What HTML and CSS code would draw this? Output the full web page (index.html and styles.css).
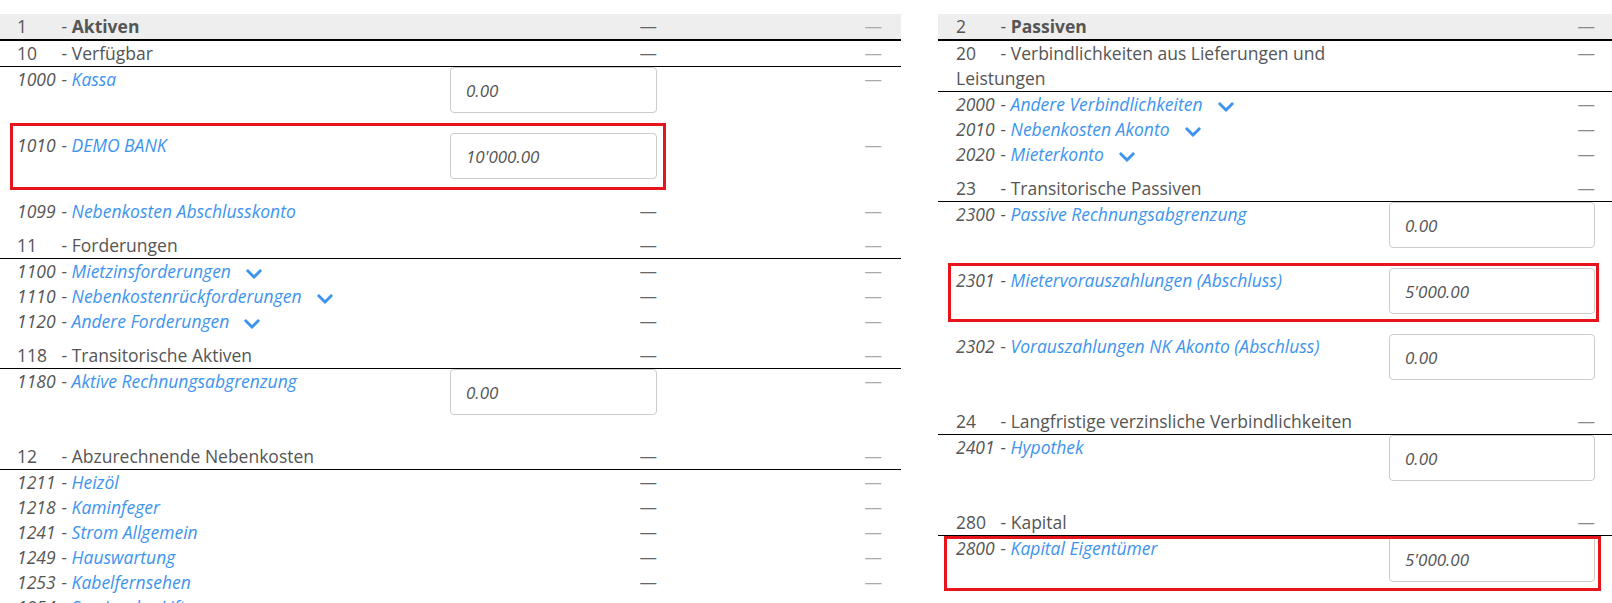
FILE: index.html
```html
<!DOCTYPE html>
<html lang="de">
<head>
  <meta charset="UTF-8">
  <meta name="viewport" content="width=device-width, initial-scale=1.0">
  <title>Eröffnungsbilanz</title>
  <link rel="stylesheet" href="styles.css">
</head>
<body>
  <svg width="0" height="0" style="position:absolute">
    <symbol id="chev" viewBox="0 120 448 275">
      <path d="M207 381L12.7 187.1c-9.4-9.4-9.4-24.6 0-33.9l22.7-22.7c9.4-9.4 24.5-9.4 33.9 0L224 284.5l154.7-154c9.4-9.3 24.5-9.3 33.9 0l22.7 22.7c9.4 9.4 9.4 24.6 0 33.9L241 381.5c-9.4 9.4-24.6 9.4-34 0z"/>
    </symbol>
  </svg>

  <div class="sheet">
    <!-- Aktiven -->
    <div class="panel left">
      <div class="row head">
        <div class="name"><span class="num">1</span> - <b>Aktiven</b></div>
        <div class="val">—</div><div class="val alt">—</div>
      </div>

      <div class="row group">
        <div class="name"><span class="num">10</span> - Verfügbar</div>
        <div class="val">—</div><div class="val alt">—</div>
      </div>
      <div class="row acct field">
        <div class="name"><span class="num">1000</span> - <a href="#">Kassa</a></div>
        <div class="val"><input class="amount" value="0.00"></div><div class="val alt">—</div>
      </div>
      <div class="row acct field">
        <span class="mark mark-bank"></span>
        <div class="name"><span class="num">1010</span> - <a href="#">DEMO BANK</a></div>
        <div class="val"><input class="amount" value="10'000.00"></div><div class="val alt">—</div>
      </div>
      <div class="row acct">
        <div class="name"><span class="num">1099</span> - <a href="#">Nebenkosten Abschlusskonto</a></div>
        <div class="val">—</div><div class="val alt">—</div>
      </div>

      <div class="row group">
        <div class="name"><span class="num">11</span> - Forderungen</div>
        <div class="val">—</div><div class="val alt">—</div>
      </div>
      <div class="row acct">
        <div class="name"><span class="num">1100</span> - <a href="#">Mietzinsforderungen</a><svg class="chev"><use href="#chev"/></svg></div>
        <div class="val">—</div><div class="val alt">—</div>
      </div>
      <div class="row acct">
        <div class="name"><span class="num">1110</span> - <a href="#">Nebenkostenrückforderungen</a><svg class="chev"><use href="#chev"/></svg></div>
        <div class="val">—</div><div class="val alt">—</div>
      </div>
      <div class="row acct">
        <div class="name"><span class="num">1120</span> - <a href="#">Andere Forderungen</a><svg class="chev"><use href="#chev"/></svg></div>
        <div class="val">—</div><div class="val alt">—</div>
      </div>

      <div class="row group">
        <div class="name"><span class="num">118</span> - Transitorische Aktiven</div>
        <div class="val">—</div><div class="val alt">—</div>
      </div>
      <div class="row acct field">
        <div class="name"><span class="num">1180</span> - <a href="#">Aktive Rechnungsabgrenzung</a></div>
        <div class="val"><input class="amount" value="0.00"></div><div class="val alt">—</div>
      </div>

      <div class="row group">
        <div class="name"><span class="num">12</span> - Abzurechnende Nebenkosten</div>
        <div class="val">—</div><div class="val alt">—</div>
      </div>
      <div class="row acct">
        <div class="name"><span class="num">1211</span> - <a href="#">Heizöl</a></div>
        <div class="val">—</div><div class="val alt">—</div>
      </div>
      <div class="row acct">
        <div class="name"><span class="num">1218</span> - <a href="#">Kaminfeger</a></div>
        <div class="val">—</div><div class="val alt">—</div>
      </div>
      <div class="row acct">
        <div class="name"><span class="num">1241</span> - <a href="#">Strom Allgemein</a></div>
        <div class="val">—</div><div class="val alt">—</div>
      </div>
      <div class="row acct">
        <div class="name"><span class="num">1249</span> - <a href="#">Hauswartung</a></div>
        <div class="val">—</div><div class="val alt">—</div>
      </div>
      <div class="row acct">
        <div class="name"><span class="num">1253</span> - <a href="#">Kabelfernsehen</a></div>
        <div class="val">—</div><div class="val alt">—</div>
      </div>
      <div class="row acct">
        <div class="name"><span class="num">1254</span> - <a href="#">Service des Lifts</a></div>
        <div class="val">—</div><div class="val alt">—</div>
      </div>
    </div>

    <!-- Passiven -->
    <div class="panel right">
      <div class="row head">
        <div class="name"><span class="num">2</span> - <b>Passiven</b></div>
        <div class="val">—</div>
      </div>

      <div class="row group">
        <div class="name"><span class="num">20</span> - Verbindlichkeiten aus Lieferungen und Leistungen</div>
        <div class="val">—</div>
      </div>
      <div class="row acct">
        <div class="name"><span class="num">2000</span> - <a href="#">Andere Verbindlichkeiten</a><svg class="chev"><use href="#chev"/></svg></div>
        <div class="val">—</div>
      </div>
      <div class="row acct">
        <div class="name"><span class="num">2010</span> - <a href="#">Nebenkosten Akonto</a><svg class="chev"><use href="#chev"/></svg></div>
        <div class="val">—</div>
      </div>
      <div class="row acct">
        <div class="name"><span class="num">2020</span> - <a href="#">Mieterkonto</a><svg class="chev"><use href="#chev"/></svg></div>
        <div class="val">—</div>
      </div>

      <div class="row group">
        <div class="name"><span class="num">23</span> - Transitorische Passiven</div>
        <div class="val">—</div>
      </div>
      <div class="row acct field">
        <div class="name"><span class="num">2300</span> - <a href="#">Passive Rechnungsabgrenzung</a></div>
        <div class="val"><input class="amount" value="0.00"></div>
      </div>
      <div class="row acct field">
        <span class="mark mark-prepay"></span>
        <div class="name"><span class="num">2301</span> - <a href="#">Mietervorauszahlungen (Abschluss)</a></div>
        <div class="val"><input class="amount" value="5'000.00"></div>
      </div>
      <div class="row acct field">
        <div class="name"><span class="num">2302</span> - <a href="#">Vorauszahlungen NK Akonto (Abschluss)</a></div>
        <div class="val"><input class="amount" value="0.00"></div>
      </div>

      <div class="row group">
        <div class="name"><span class="num">24</span> - Langfristige verzinsliche Verbindlichkeiten</div>
        <div class="val">—</div>
      </div>
      <div class="row acct field">
        <div class="name"><span class="num">2401</span> - <a href="#">Hypothek</a></div>
        <div class="val"><input class="amount" value="0.00"></div>
      </div>

      <div class="row group">
        <div class="name"><span class="num">280</span> - Kapital</div>
        <div class="val">—</div>
      </div>
      <div class="row acct field">
        <span class="mark mark-equity"></span>
        <div class="name"><span class="num">2800</span> - <a href="#">Kapital Eigentümer</a></div>
        <div class="val"><input class="amount" value="5'000.00"></div>
      </div>
    </div>
  </div>
</body>
</html>
```

FILE: styles.css
```css
:root {
  --text: #555;
  --link: #3d94ee;
  --rule: #000;
  --head-bg: #eee;
  --mark: #e8141c;
}
html, body {
  margin: 0;
  height: 100%;
  overflow: hidden;
  background: #fff;
}
body {
  font-family: 'Open Sans', 'Liberation Sans', sans-serif;
  font-size: 17.5px;
  color: var(--text);
}
.sheet {
  display: grid;
  grid-template-columns: 901px 674px;
  column-gap: 37px;
  padding-top: 14px;
}
.panel {
  display: flex;
  flex-direction: column;
}
.row {
  display: grid;
  grid-template-columns: 1fr 207px 225px;
  line-height: 25px;
  padding: 0 19px 0 17px;
  position: relative;
}
.right .row {
  grid-template-columns: 1fr 206px;
  padding: 0 17px 0 18px;
}
.row.head {
  background: var(--head-bg);
  border-bottom: 2px solid var(--rule);
}
.row.head b {
  font-weight: 700;
}
.row.group {
  border-bottom: 1px solid var(--rule);
}
.row.acct + .row.group {
  margin-top: 9px;
}
.row.field {
  height: 66px;
  box-sizing: border-box;
}
.num {
  display: inline-block;
  width: 40px;
}
.acct .name {
  font-style: italic;
}
.name a {
  color: var(--link);
  text-decoration: none;
}
.chev {
  width: 16px;
  height: 10px;
  margin-left: 15px;
  vertical-align: -1px;
  fill: var(--link);
}
.val {
  text-align: right;
  color: #666;
}
.val.alt {
  color: #aaa;
}
.right .val {
  color: #888;
}
.amount {
  box-sizing: border-box;
  width: 100%;
  height: 46px;
  margin-top: 0;
  padding: 0 15px;
  border: 1px solid #ccc;
  border-radius: 4px;
  font-family: inherit;
  font-size: 17px;
  font-style: italic;
  color: var(--text);
  background: #fff;
  display: block;
}
.mark {
  position: absolute;
  box-sizing: border-box;
  border: 3px solid var(--mark);
  pointer-events: none;
}
.mark-bank {
  left: 10px;
  top: -10px;
  width: 656px;
  height: 67px;
}
.mark-prepay {
  left: 10px;
  top: -5px;
  width: 651px;
  height: 59px;
}
.mark-equity {
  left: 6px;
  top: 0;
  width: 657px;
  height: 55px;
}
```
